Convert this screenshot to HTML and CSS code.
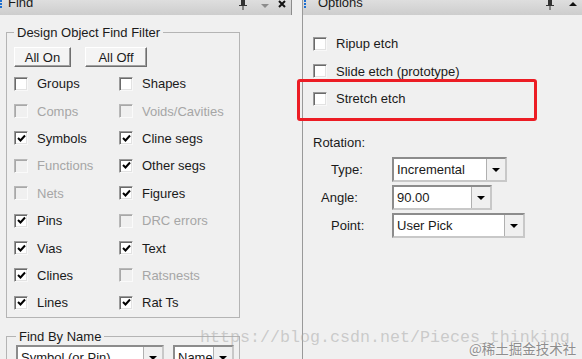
FILE: index.html
```html
<!DOCTYPE html>
<html lang="en">
<head>
    <meta charset="UTF-8">
    <title>Find / Options</title>
    <link rel="stylesheet" href="styles.css">
</head>
<body>
<div class="screen">
    <div class="panel find">
        <div class="titlebar">
            <span class="grip"></span>
            <span class="title">Find</span>
            <span class="tools find-tools">
                <svg class="pin" width="8" height="10" viewBox="0 0 8 10"><rect x="2" y="0" width="4" height="5" fill="#333"/><rect x="0" y="5" width="8" height="1" fill="#333"/><rect x="3.5" y="6" width="1" height="4" fill="#333"/></svg>
                <svg class="drop" width="8" height="10" viewBox="0 0 8 10"><polygon points="0,4 8,4 4,8" fill="#8c8c8c"/></svg>
                <svg class="close" width="8" height="10" viewBox="0 0 8 10"><path d="M1 1 L7 7 M7 1 L1 7" stroke="#111" stroke-width="2"/></svg>
            </span>
        </div>

        <fieldset class="group filter">
            <legend>Design Object Find Filter</legend>
            <div class="btn-row">
                <button class="btn on">All On</button>
                <button class="btn off">All Off</button>
            </div>
            <div class="check-grid">
                <label class="check"><span class="box"></span>Groups</label>
                <label class="check"><span class="box"></span>Shapes</label>
                <label class="check disabled"><span class="box"></span>Comps</label>
                <label class="check disabled"><span class="box"></span>Voids/Cavities</label>
                <label class="check checked"><span class="box"><svg width="9" height="9" viewBox="0 0 9 9"><polyline points="1,4 3.5,6.5 8,1.5" fill="none" stroke="#000" stroke-width="2"/></svg></span>Symbols</label>
                <label class="check checked"><span class="box"><svg width="9" height="9" viewBox="0 0 9 9"><polyline points="1,4 3.5,6.5 8,1.5" fill="none" stroke="#000" stroke-width="2"/></svg></span>Cline segs</label>
                <label class="check disabled"><span class="box"></span>Functions</label>
                <label class="check checked"><span class="box"><svg width="9" height="9" viewBox="0 0 9 9"><polyline points="1,4 3.5,6.5 8,1.5" fill="none" stroke="#000" stroke-width="2"/></svg></span>Other segs</label>
                <label class="check disabled"><span class="box"></span>Nets</label>
                <label class="check checked"><span class="box"><svg width="9" height="9" viewBox="0 0 9 9"><polyline points="1,4 3.5,6.5 8,1.5" fill="none" stroke="#000" stroke-width="2"/></svg></span>Figures</label>
                <label class="check checked"><span class="box"><svg width="9" height="9" viewBox="0 0 9 9"><polyline points="1,4 3.5,6.5 8,1.5" fill="none" stroke="#000" stroke-width="2"/></svg></span>Pins</label>
                <label class="check disabled"><span class="box"></span>DRC errors</label>
                <label class="check checked"><span class="box"><svg width="9" height="9" viewBox="0 0 9 9"><polyline points="1,4 3.5,6.5 8,1.5" fill="none" stroke="#000" stroke-width="2"/></svg></span>Vias</label>
                <label class="check checked"><span class="box"><svg width="9" height="9" viewBox="0 0 9 9"><polyline points="1,4 3.5,6.5 8,1.5" fill="none" stroke="#000" stroke-width="2"/></svg></span>Text</label>
                <label class="check checked"><span class="box"><svg width="9" height="9" viewBox="0 0 9 9"><polyline points="1,4 3.5,6.5 8,1.5" fill="none" stroke="#000" stroke-width="2"/></svg></span>Clines</label>
                <label class="check disabled"><span class="box"></span>Ratsnests</label>
                <label class="check checked"><span class="box"><svg width="9" height="9" viewBox="0 0 9 9"><polyline points="1,4 3.5,6.5 8,1.5" fill="none" stroke="#000" stroke-width="2"/></svg></span>Lines</label>
                <label class="check checked"><span class="box"><svg width="9" height="9" viewBox="0 0 9 9"><polyline points="1,4 3.5,6.5 8,1.5" fill="none" stroke="#000" stroke-width="2"/></svg></span>Rat Ts</label>
            </div>
        </fieldset>

        <fieldset class="group byname">
            <legend>Find By Name</legend>
            <div class="combo-row">
                <div class="combo symbol"><span class="value">Symbol (or Pin)</span><span class="arrow"></span></div>
                <div class="combo name"><span class="value">Name</span><span class="arrow"></span></div>
            </div>
        </fieldset>
    </div>

    <div class="panel options">
        <div class="titlebar">
            <span class="grip"></span>
            <span class="title">Options</span>
            <span class="tools opt-tools">
                <svg class="pin" width="8" height="10" viewBox="0 0 8 10"><rect x="2" y="0" width="4" height="5" fill="#333"/><rect x="0" y="5" width="8" height="1" fill="#333"/><rect x="3.5" y="6" width="1" height="4" fill="#333"/></svg>
                <svg class="up" width="8" height="10" viewBox="0 0 8 10"><polygon points="0,6 8,6 4,2" fill="#111"/></svg>
            </span>
        </div>

        <div class="options-body">
            <label class="check"><span class="box"></span>Ripup etch</label>
            <label class="check"><span class="box"></span>Slide etch (prototype)</label>
            <label class="check"><span class="box"></span>Stretch etch</label>

            <div class="section-label">Rotation:</div>
            <div class="rotation">
                <span class="lbl">Type:</span>
                <div class="combo type"><span class="value">Incremental</span><span class="arrow"></span></div>
                <span class="lbl angle">Angle:</span>
                <div class="combo angle-box"><span class="value">90.00</span><span class="arrow"></span></div>
                <span class="lbl">Point:</span>
                <div class="combo point"><span class="value">User Pick</span><span class="arrow"></span></div>
            </div>
        </div>
    </div>

    <!-- annotation + image watermarks sit over the UI -->
    <div class="highlight"></div>
    <div class="watermark">https://blog.csdn.net/Pieces_thinking</div>
    <div class="credit">@稀土掘金技术社区</div>
</div>
</body>
</html>
```

FILE: styles.css
```css
body {
    margin: 0;
    background-color: #f0f0f0;
    font-family: "Liberation Sans", Arial, sans-serif;
    font-size: 13px;
    color: #1a1a1a;
    overflow: hidden;
}
.screen {
    position: relative;
    display: flex;
    width: 582px;
    height: 359px;
    overflow: hidden;
    background-color: #f0f0f0;
}
.panel {
    display: flex;
    flex-direction: column;
}
.panel > * {
    flex-shrink: 0;
}
.panel.find {
    width: 292px;
}
.panel.options {
    margin-left: 10px;
    flex: 1;
    border-left: 1px solid #999999;
}

/* title bars */
.titlebar {
    display: flex;
    align-items: flex-start;
    height: 15px;
    overflow: hidden;
    background: linear-gradient(to bottom, #dedede, #cdcdcd);
}
.find .titlebar {
    border-right: 1px solid #8c8c8c;
}
.grip {
    width: 2px;
    height: 9px;
    background: repeating-linear-gradient(to bottom, #1e6fd0 0, #1e6fd0 2px, transparent 2px, transparent 3px);
}
.title {
    margin-top: -5px;
    margin-left: 6px;
    line-height: 15px;
    font-size: 13px;
}
.options .grip {
    margin-left: 1px;
}
.options .title {
    margin-left: 12px;
}
.tools {
    display: flex;
    margin-left: auto;
    margin-right: 5px;
}
.find-tools svg + svg {
    margin-left: 14px;
}
.find-tools .close {
    margin-left: 9px;
}
.opt-tools .up {
    margin-left: 15px;
}

/* group boxes */
.group {
    margin: 10px 0 0 6px;
    width: 234px;
    box-sizing: border-box;
    border: 1px solid #b4b4b4;
    padding: 7px 0 0 7px;
    min-width: 0;
}
.group legend {
    padding: 0 3px;
    margin-left: 0;
    line-height: 15px;
}
.btn-row {
    display: flex;
    gap: 14px;
}
.btn {
    height: 20px;
    padding: 0;
    font-family: inherit;
    font-size: 13px;
    color: #1a1a1a;
    background-color: #f4f4f4;
    border: 1px solid;
    border-color: #ffffff #6f6f6f #6f6f6f #ffffff;
    box-shadow: inset -1px -1px 0 #a0a0a0;
}
.btn.on {
    width: 57px;
}
.btn.off {
    width: 62px;
}
.check-grid {
    display: grid;
    grid-template-columns: 105px 1fr;
    grid-auto-rows: 27.4px;
    margin-top: 3px;
}
.check {
    display: flex;
    align-items: center;
    white-space: nowrap;
}
.box {
    display: flex;
    align-items: center;
    justify-content: center;
    width: 14px;
    height: 14px;
    box-sizing: border-box;
    margin-right: 9px;
    background-color: #ffffff;
    border: 1px solid;
    border-color: #9a9a9a #f8f8f8 #f8f8f8 #9a9a9a;
    box-shadow: inset 1px 1px 0 #6a6a6a, inset -1px -1px 0 #e2e2e2;
}
.check.disabled {
    color: #a6a6a6;
}
.check.disabled .box {
    background-color: #f0f0f0;
    border-color: #b8b8b8 #fafafa #fafafa #b8b8b8;
    box-shadow: inset 1px 1px 0 #a8a8a8;
}

.group.byname {
    margin-top: 11px;
    padding-top: 1px;
    padding-left: 9px;
}
.combo-row {
    display: flex;
    gap: 9px;
}

/* combo boxes */
.combo {
    display: flex;
    height: 25px;
    box-sizing: border-box;
    background-color: #ffffff;
    border: 2px solid;
    border-color: #8c8c8c #c8c8c8 #c8c8c8 #8c8c8c;
}
.combo .value {
    flex: 1;
    padding-left: 3px;
    line-height: 21px;
    white-space: nowrap;
    overflow: hidden;
}
.combo .arrow {
    position: relative;
    width: 18px;
    background-color: #f0f0f0;
    border-left: 1px solid #b0b0b0;
}
.combo .arrow::after {
    content: "";
    position: absolute;
    left: 5px;
    top: 9px;
    border-left: 4px solid transparent;
    border-right: 4px solid transparent;
    border-top: 4px solid #000000;
}
.combo.symbol {
    width: 148px;
}
.combo.name {
    width: 61px;
}
.combo.type {
    width: 115px;
}
.combo.angle-box {
    width: 100px;
}
.combo.point {
    width: 133px;
}

/* options panel */
.options-body {
    display: flex;
    flex-direction: column;
    padding: 15px 0 0 10px;
}
.options-body .check {
    height: 27.5px;
}
.section-label {
    margin-top: 22px;
    line-height: 16px;
}
.rotation {
    display: grid;
    grid-template-columns: 79px auto;
    grid-auto-rows: 25px;
    row-gap: 3px;
    margin-top: 6px;
    justify-items: start;
    align-items: center;
}
.lbl {
    padding-left: 18px;
}
.lbl.angle {
    padding-left: 8px;
}

/* overlays */
.highlight {
    position: absolute;
    left: 297px;
    top: 79px;
    width: 240px;
    height: 42px;
    box-sizing: border-box;
    border: 3px solid #ec1c24;
    border-radius: 3px;
}
.watermark {
    position: absolute;
    left: 200px;
    top: 328px;
    font-family: "Liberation Mono", "Courier New", monospace;
    font-size: 16.67px;
    line-height: 20px;
    color: rgba(170, 170, 170, 0.55);
    white-space: nowrap;
}
.credit {
    position: absolute;
    left: 469px;
    top: 340px;
    font-family: "Noto Sans CJK SC", sans-serif;
    font-size: 13.5px;
    line-height: 16px;
    color: #8e8e8e;
    text-shadow: 0 0 2px #ffffff;
}
```
